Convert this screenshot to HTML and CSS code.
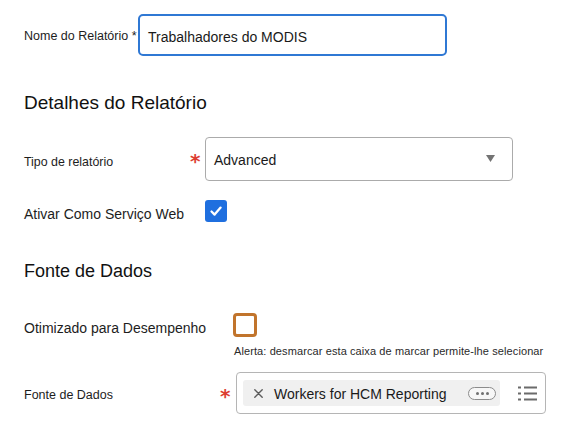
FILE: index.html
```html
<!DOCTYPE html>
<html lang="pt">
<head>
<meta charset="utf-8">
<title>Relatório</title>
<link rel="stylesheet" href="styles.css">
</head>
<body>
<div class="page">
  <div class="name-row">
    <div class="name-label">Nome do Relatório *</div>
    <div class="text-input"><span class="input-value">Trabalhadores do MODIS</span></div>
  </div>

  <h2 class="heading heading-details">Detalhes do Relatório</h2>

  <div class="row row-type s1">
    <div class="label label-type">Tipo de relatório</div>
    <div class="star">*</div>
    <div class="select">
      <span class="select-value">Advanced</span>
      <svg class="caret" width="9" height="7" viewBox="0 0 9 7"><path d="M0 0 H9 L4.5 7 Z" fill="#737373"/></svg>
    </div>
  </div>

  <div class="row row-ws s1">
    <div class="label label-ws">Ativar Como Serviço Web</div>
    <div class="star"></div>
    <div class="checkbox checked">
      <svg width="22" height="22" viewBox="0 0 22 22"><path d="M6.5 11.5 L9.6 14.6 L15.6 7.6" fill="none" stroke="#fff" stroke-width="2.3" stroke-linecap="round" stroke-linejoin="round"/></svg>
    </div>
  </div>

  <h2 class="heading heading-source">Fonte de Dados</h2>

  <div class="row row-perf s2">
    <div class="label label-perf">Otimizado para Desempenho</div>
    <div class="star"></div>
    <div class="checkbox unchecked"></div>
  </div>

  <div class="row row-alert s2">
    <div class="label"></div>
    <div class="star"></div>
    <div class="alert">Alerta: desmarcar esta caixa de marcar permite-lhe selecionar</div>
  </div>

  <div class="row row-source s2">
    <div class="label label-source">Fonte de Dados</div>
    <div class="star">*</div>
    <div class="multi">
      <div class="pill">
        <span class="pill-x">
          <svg width="9" height="9" viewBox="0 0 9 9"><path d="M0.8 0.8 L8.2 8.2 M8.2 0.8 L0.8 8.2" stroke="#5c5c5c" stroke-width="1.4" stroke-linecap="round"/></svg>
        </span>
        <span class="pill-text">Workers for HCM Reporting</span>
        <span class="more">
          <i class="dot"></i><i class="dot"></i><i class="dot"></i>
        </span>
      </div>
      <svg class="list-icon" width="19" height="15" viewBox="0 0 19 15">
        <rect x="0" y="0.5" width="3" height="2" fill="#6b6b6b"/>
        <rect x="6" y="0.5" width="13" height="2" fill="#6b6b6b"/>
        <rect x="0" y="6.5" width="3" height="2" fill="#6b6b6b"/>
        <rect x="6" y="6.5" width="13" height="2" fill="#6b6b6b"/>
        <rect x="0" y="12.5" width="3" height="2" fill="#6b6b6b"/>
        <rect x="6" y="12.5" width="13" height="2" fill="#6b6b6b"/>
      </svg>
    </div>
  </div>
</div>
</body>
</html>
```

FILE: styles.css
```css
html, body {
  margin: 0;
  padding: 0;
  background: #ffffff;
}

body {
  font-family: "Liberation Sans", Arial, sans-serif;
  color: #1d1d1d;
}

.page {
  display: flex;
  flex-direction: column;
  padding: 14px 0 0 24px;
}

/* Report name row */
.name-row {
  display: flex;
  align-items: flex-start;
  height: 42px;
}

.name-label {
  font-size: 12.5px;
  line-height: 15px;
  padding-top: 15px;
  width: 114px;
  white-space: nowrap;
}

.text-input {
  box-sizing: border-box;
  width: 309px;
  height: 42px;
  border: 2px solid #2f78d4;
  border-radius: 5px;
  display: flex;
  align-items: center;
  padding: 0 8px;
}

.input-value {
  font-size: 14px;
  line-height: 16px;
  padding-top: 4px;
  color: #1a1a1a;
}

/* Headings */
.heading {
  margin: 0;
  font-weight: normal;
  color: #111;
  line-height: 22px;
}

.heading-details {
  font-size: 19px;
  margin-top: 36px;
}

.heading-source {
  font-size: 18px;
  margin-top: 38px;
}

/* Generic rows */
.row {
  display: flex;
  align-items: flex-start;
}

.s1 .label { width: 166px; }
.s1 .star { width: 15px; }
.s2 .label { width: 196px; }
.s2 .star { width: 13px; }

.label {
  flex: none;
  white-space: nowrap;
}

.star {
  flex: none;
  font-family: "DejaVu Sans", sans-serif;
  font-weight: bold;
  font-size: 20px;
  line-height: 20px;
  padding-top: 14px;
  color: #dc3d31;
}

/* Section 1 */
.row-type {
  margin-top: 23px;
  height: 44px;
}

.label-type {
  font-size: 12.4px;
  line-height: 14px;
  padding-top: 18px;
}

.select {
  box-sizing: border-box;
  width: 308px;
  height: 44px;
  border: 1px solid #ababab;
  border-radius: 4px;
  display: flex;
  align-items: center;
  justify-content: space-between;
  padding: 0 17px 0 8px;
}

.select-value {
  font-size: 14px;
  line-height: 16px;
  padding-top: 2px;
  color: #1a1a1a;
}

.caret {
  display: block;
  margin-top: -1px;
}

.row-ws {
  margin-top: 19px;
  height: 22px;
}

.label-ws {
  font-size: 14px;
  line-height: 16px;
  padding-top: 6px;
}

.checkbox {
  box-sizing: border-box;
  flex: none;
}

.checkbox.checked {
  width: 22px;
  height: 22px;
  background: #1f6fdf;
  border-radius: 3px;
}

.checkbox.checked svg {
  display: block;
}

.checkbox.unchecked {
  width: 24px;
  height: 24px;
  border: 3px solid #c1742c;
  border-radius: 4px;
  background: #fff;
}

/* Section 2 */
.row-perf {
  margin-top: 31px;
  height: 24px;
}

.label-perf {
  font-size: 14px;
  line-height: 16px;
  padding-top: 7px;
}

.row-alert {
  margin-top: 8px;
}

.alert {
  font-size: 11px;
  letter-spacing: 0.1px;
  line-height: 13px;
  color: #2a2a2a;
  padding-left: 1px;
  white-space: nowrap;
}

.row-source {
  margin-top: 13px;
  height: 42px;
}

.label-source {
  font-size: 12.5px;
  line-height: 15px;
  padding-top: 16px;
}

.multi {
  box-sizing: border-box;
  width: 310px;
  height: 42px;
  margin-left: 3px;
  border: 1px solid #b5b5b5;
  border-radius: 4px;
  display: flex;
  align-items: center;
  padding: 0 8px 0 6px;
  gap: 18px;
}

.pill {
  box-sizing: border-box;
  width: 257px;
  height: 26px;
  background: #f0f0f0;
  border-radius: 3px;
  display: flex;
  align-items: center;
  padding-left: 11px;
}

.pill-x {
  display: flex;
  width: 20px;
  flex: none;
}

.pill-x svg {
  display: block;
  margin-top: 1px;
}

.pill-text {
  font-size: 14px;
  line-height: 16px;
  padding-top: 2px;
  color: #1a1a1a;
  white-space: nowrap;
  width: 194px;
  flex: none;
}

.more {
  box-sizing: border-box;
  width: 28px;
  height: 13px;
  border: 1px solid #8c8c8c;
  border-radius: 7px;
  background: #f7f7f7;
  display: flex;
  align-items: center;
  justify-content: center;
  gap: 2px;
  margin-top: 1px;
}

.dot {
  display: block;
  width: 3px;
  height: 3px;
  border-radius: 50%;
  background: #707070;
}

.list-icon {
  display: block;
  flex: none;
}
```
